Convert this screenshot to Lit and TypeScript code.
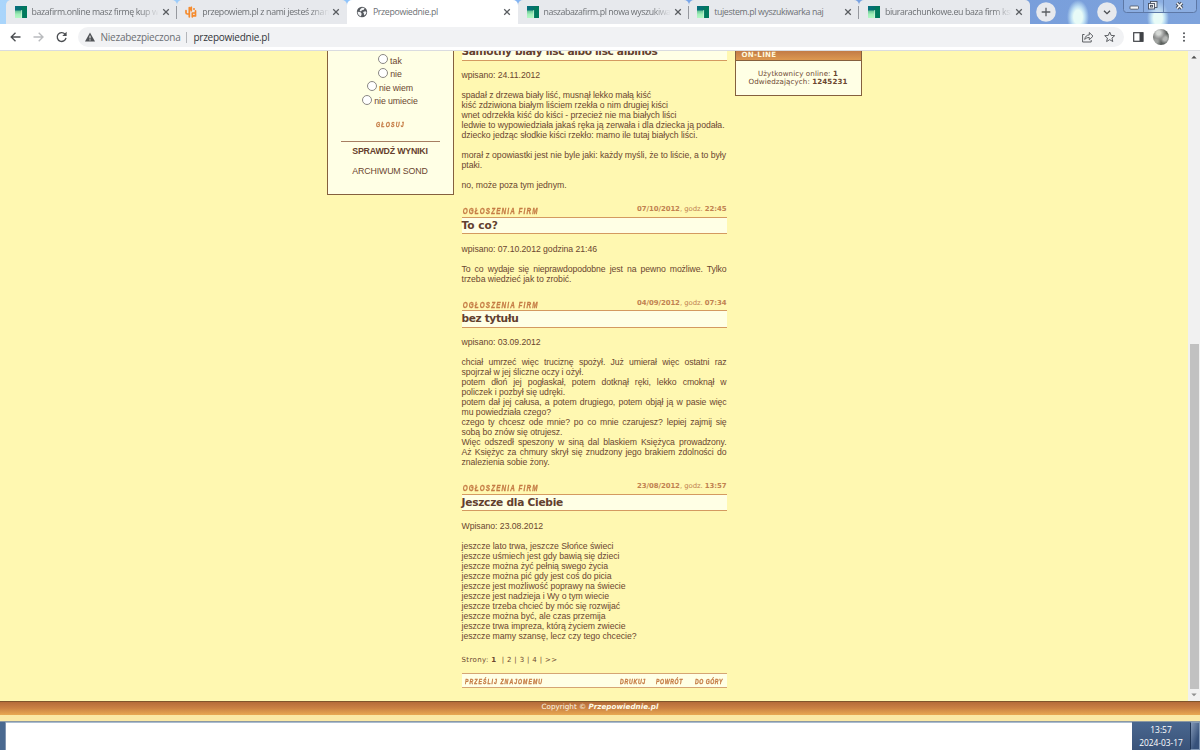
import { LitElement, html, css, nothing } from "lit";
import { customElement, property } from "lit/decorators.js";

/** One line of text whose tracking is adjusted to fill a given width. */
@customElement("fit-text")
class FitText extends LitElement {
  @property({ type: Number }) w = 0;
  /** Horizontal scale that an ancestor applies. */
  @property({ type: Number }) k = 1;
  static styles = css`
    :host { display: inline-block; white-space: pre; }
  `;
  render() { return html`<slot></slot>`; }
  firstUpdated() {
    const n = (this.textContent || "").length;
    if (!this.w || !n) return;
    const base = parseFloat(getComputedStyle(this).letterSpacing) || 0;
    const now = this.getBoundingClientRect().width;
    this.style.letterSpacing = `${base + (this.w - now) / this.k / n}px`;
  }
}

const close = html`<svg class="x" viewBox="0 0 8 8"><path d="M1.200 1.200l5.600 5.600M6.800 1.200L1.200 6.800" stroke="#5a5d61" stroke-width="1.250" fill="none"/></svg>`;

const green = html`<svg class="fav" viewBox="0 0 12 12">
  <defs><linearGradient id="g" x1="0" y1="0" x2="0" y2="1"><stop offset="0" stop-color="#5fbf90"/><stop offset=".5" stop-color="#a0eeb8"/><stop offset="1" stop-color="#b4f8c4"/></linearGradient>
  <linearGradient id="h" x1="0" y1="0" x2="1" y2="0"><stop offset="0" stop-color="#087080"/><stop offset="1" stop-color="#03705a"/></linearGradient></defs>
  <rect width="12" height="12" fill="url(#h)"/><rect y="4.500" width="7" height="7.500" fill="url(#g)"/><rect x="7" y="1" width="5" height="11" fill="#007a5c"/><path d="M6.600 4v8" stroke="#d9f5e2" stroke-width=".6"/></svg>`;

const orange = html`<svg class="fav" viewBox="0 0 12 12"><g fill="none" stroke="#f58a2c" stroke-width="1.700" stroke-linecap="round" stroke-linejoin="round">
  <path d="M1 4.500v2.300q0 1.200 1.400 1.200h1.800M4.300 1.500v9.300M4.300 4l2-2.700v3.400M7.300 10.800V7h3.200V4.800M10.500 7.500v2.400H8"/></g><circle cx="9" cy="3" r="1" fill="#f58a2c"/></svg>`;

const globe = html`<svg class="fav" viewBox="0 0 12 12"><circle cx="6" cy="6" r="5.200" fill="#55595e"/><path d="M1.600 5.800l2.600.2 1.300 1.300v1.500l-.7 1.600C2.600 9.600 1.500 7.700 1.600 5.800zM6 1.800l2.500.3-.6 1.700-2 .4-1 1.300-1.300-.7.8-1.700zM7 6l2.300-.7 1.200.6-.6 2-1.800 1.500L7.800 7.300z" fill="#f2f3f5"/></svg>`;

interface Tab { icon: unknown; text: string; w: number; active?: boolean; sep?: boolean; }
const tabs: Tab[] = [
  { icon: green, text: "bazafirm.online masz firmę kup w", w: 127, sep: true },
  { icon: orange, text: "przepowiem.pl z nami jesteś znan", w: 127 },
  { icon: globe, text: "Przepowiednie.pl", w: 65, active: true },
  { icon: green, text: "naszabazafirm.pl nowa wyszukiwa", w: 127, sep: true },
  { icon: green, text: "tujestem.pl wyszukiwarka naj", w: 109, sep: true },
  { icon: green, text: "biurarachunkowe.eu baza firm ksi", w: 127 },
];

@customElement("browser-bar")
class BrowserBar extends LitElement {
  static styles = css`
    :host { display: block; height: 51px; flex: none; font-family: "Open Sans", "Noto Sans", sans-serif; }
    .strip { height: 24px; display: flex; background: linear-gradient(90deg, #a9d5fb 0, #8fc4fb 30%, #78a6ea 55%, #789edb 84%, #7ea3dc 100%); overflow: hidden; box-sizing: border-box; padding-left: 6px; }
    .tab { width: 170.700px; flex: none; box-sizing: border-box; display: flex; align-items: center; padding: 0 7px 0 8.500px; background: #e7e9ed; border-radius: 5px 5px 0 0; position: relative; font-size: 8.800px; color: #6d7074; }
    .tab.active { background: #fff; }
    .tab.sep::after { content: ""; position: absolute; right: 0; top: 6px; width: 1px; height: 13px; background: #96999f; }
    .fav { width: 12px; height: 12px; margin-right: 5px; flex: none; }
    .label { width: 127px; overflow: hidden; white-space: pre; flex: none; line-height: 14px; height: 14px; }
    .label.fade { -webkit-mask-image: linear-gradient(90deg, #000 108px, transparent 127px); mask-image: linear-gradient(90deg, #000 108px, transparent 127px); }
    .x { width: 8px; height: 8px; margin-left: 3px; flex: none; }
    .sky { flex: 1; display: flex; background: radial-gradient(ellipse 11px 17px at 48px 17px, #e8fbf7 0 40%, #bfe0f4 62%, transparent 100%), radial-gradient(ellipse 11px 17px at 128px 18px, #e8fbf7 0 40%, #bfe0f4 62%, transparent 100%); }
    .round { width: 20px; height: 20px; margin-top: 2px; }
    .plus { margin-left: 6px; }
    .chev { margin-left: 41px; }
    .win { width: 74px; height: 14px; margin-left: 6px; margin-top: -1px; }
    .bar { height: 26px; background: #fff; display: flex; align-items: center; border-bottom: 1px solid #dadce0; }
    .bar svg { flex: none; display: block; }
    .pill { width: 1046px; height: 20px; margin-left: 8.500px; border-radius: 10px; background: #f1f2f4; display: flex; align-items: center; font-size: 10px; color: #6b6e73; line-height: 18px; box-sizing: border-box; padding: 0 8px 0 7px; }
    .warn { margin-right: 6px; }
    .div { width: 1px; height: 11px; background: #b4b6ba; margin: 0 7px 0 5px; }
    .url { color: #34363a; flex: 1; }
    .panel { margin-left: 9px; }
    .av { width: 16px; height: 16px; border-radius: 50%; background: radial-gradient(circle at 35% 25%, #d5d8d5 0 12%, #999c 35%, transparent 50%), radial-gradient(circle at 75% 60%, #b4b6b4 0 12%, transparent 35%), radial-gradient(circle at 20% 75%, #a0a3a0 0 10%, transparent 30%), #5b605d; margin-left: 9px; }
  `;
  render() {
    return html`
      <div class="strip">
        ${tabs.map(t => html`<div class="tab ${t.active ? "active" : ""} ${t.sep ? "sep" : ""}">${t.icon}<div class="label ${t.w > 120 ? "fade" : ""}"><fit-text .w=${t.w}>${t.text}</fit-text></div>${close}</div>`)}
        <div class="sky">
          <svg class="round plus" viewBox="0 0 20 20"><circle cx="10" cy="10" r="9.800" fill="#e7e9ed"/><path d="M10 5.700v8.600M5.700 10h8.600" stroke="#5a5d61" stroke-width="1.300"/></svg>
          <svg class="round chev" viewBox="0 0 20 20"><circle cx="10" cy="10" r="9.800" fill="#e7e9ed"/><path d="M7 8.700l3 3 3-3" fill="none" stroke="#494c50" stroke-width="1.300"/></svg>
          <svg class="win" viewBox="0 0 74 14"><rect x=".5" y="-4" width="73" height="17.500" rx="3" fill="#9dbde8" fill-opacity=".45" stroke="#5d78a6"/><path d="M20.500 0v13M40.500 0v13" stroke="#5d78a6" stroke-width=".8"/>
            <rect x="7" y="7" width="8.500" height="3.200" rx=".8" fill="#f4f6f8" stroke="#47505f" stroke-width=".8"/>
            <g fill="#f0f2f5" stroke="#47505f" stroke-width=".9"><rect x="27.500" y="2.500" width="6.500" height="6"/><rect x="25.500" y="4.500" width="6" height="5.500"/><rect x="27.500" y="6.400" width="2" height="1.600"/></g>
            <path d="M54 4l5 5.500M59 4l-5 5.500" stroke="#47505f" stroke-width="3.400"/><path d="M54 4l5 5.500M59 4l-5 5.500" stroke="#f5f6f8" stroke-width="1.500"/></svg>
        </div>
      </div>
      <div class="bar">
        <svg width="69" height="20" viewBox="0 0 69 20"><g fill="none" stroke="#4b4e52" stroke-width="1.350"><path d="M20.500 10H11.500M15.500 5.700L11.200 10l4.300 4.300"/><path d="M33.500 10h9M38.700 5.700L43 10l-4.300 4.300" stroke="#b9bbbe"/><path d="M65 7.200A4.400 4.400 0 1 0 66 10.800"/></g><path d="M66.600 4.800v4.300h-4.300z" fill="#4b4e52"/></svg>
        <div class="pill">
          <svg class="warn" width="10" height="10" viewBox="0 0 10 10"><path d="M5 .5L10 9.500H0z" fill="#505357"/><path d="M5 3.700v2.700M5 7.300v1.200" stroke="#fff" stroke-width="1"/></svg>
          <fit-text .w=${80}>Niezabezpieczona</fit-text><span class="div"></span><span class="url"><fit-text .w=${76}>przepowiednie.pl</fit-text></span>
          <svg width="34" height="12" viewBox="0 0 34 12"><g fill="none" stroke="#5c5f63" stroke-width="1"><path d="M2.500 3.500H.6v7.500h8.600V9M2.700 8.500C3 5.500 5 3.900 7.300 3.900V1.500l3.700 3.700-3.700 3.600V6.500C5.300 6.500 4 7 2.700 8.500z"/><path d="M27.700 1l1.400 3.400 3.600.3-2.750 2.350.85 3.500-3.100-1.900-3.100 1.900.85-3.500L22.700 4.700l3.600-.3z"/></g></svg>
        </div>
        <svg class="panel" width="11" height="10" viewBox="0 0 11 10"><rect x=".7" y=".7" width="9.200" height="8.600" fill="none" stroke="#404347" stroke-width="1.200"/><rect x="6.500" y=".5" width="3.800" height="9" fill="#404347"/></svg>
        <div class="av"></div>
        <svg width="24" height="14" viewBox="0 0 24 14"><g fill="#505357"><circle cx="15" cy="3.200" r="1"/><circle cx="15" cy="7" r="1"/><circle cx="15" cy="10.800" r="1"/></g></svg>
      </div>`;
  }
}

interface Line { t: string; w?: number; j?: boolean; }
interface Post { date?: string; hour?: string; title: string; tw: number; lines: Line[]; }
const posts: Post[] = [
  { title: "Samotny biały liść albo liść albinos", tw: 196, lines: [
    { t: "wpisano: 24.11.2012", w: 78.5 }, { t: "" },
    { t: "spadał z drzewa biały liść, musnął lekko małą kiść", w: 189.5 },
    { t: "kiść zdziwiona białym liściem rzekła o nim drugiej kiści", w: 206.5 },
    { t: "wnet odrzekła kiść do kiści - przecież nie ma białych liści", w: 215 },
    { t: "ledwie to wypowiedziała jakaś ręka ją zerwała i dla dziecka ją podała.", w: 263 },
    { t: "dziecko jedząc słodkie kiści rzekło: mamo ile tutaj białych liści.", w: 236 }, { t: "" },
    { t: "morał z opowiastki jest nie byle jaki: każdy myśli, że to liście, a to były", w: 264.5 },
    { t: "ptaki.", w: 20.5 }, { t: "" }, { t: "no, może poza tym jednym.", w: 105 } ] },
  { date: "07/10/2012", hour: "22:45", title: "To co?", tw: 36.5, lines: [
    { t: "wpisano: 07.10.2012 godzina 21:46", w: 135.5 }, { t: "" },
    { t: "To co wydaje się nieprawdopodobne jest na pewno możliwe. Tylko", j: true },
    { t: "trzeba wiedzieć jak to zrobić.", w: 110 } ] },
  { date: "04/09/2012", hour: "07:34", title: "bez tytułu", tw: 57, lines: [
    { t: "wpisano: 03.09.2012", w: 79 }, { t: "" },
    { t: "chciał umrzeć więc truciznę spożył. Już umierał więc ostatni raz", j: true },
    { t: "spojrzał w jej śliczne oczy i ożył.", w: 122 },
    { t: "potem dłoń jej pogłaskał, potem dotknął ręki, lekko cmoknął w", j: true },
    { t: "policzek i pozbył się udręki.", w: 103.5 },
    { t: "potem dał jej całusa, a potem drugiego, potem objął ją w pasie więc", j: true },
    { t: "mu powiedziała czego?", w: 89.5 },
    { t: "czego ty chcesz ode mnie? po co mnie czarujesz? lepiej zajmij się", j: true },
    { t: "sobą bo znów się otrujesz.", w: 101 },
    { t: "Więc odszedł speszony w siną dal blaskiem Księżyca prowadzony.", j: true },
    { t: "Aż Księżyc za chmury skrył się znudzony jego brakiem zdolności do", j: true },
    { t: "znalezienia sobie żony.", w: 88 } ] },
  { date: "23/08/2012", hour: "13:57", title: "Jeszcze dla Ciebie", tw: 101.5, lines: [
    { t: "Wpisano: 23.08.2012", w: 81.5 }, { t: "" },
    { t: "jeszcze lato trwa, jeszcze Słońce świeci", w: 152 },
    { t: "jeszcze uśmiech jest gdy bawią się dzieci", w: 158 },
    { t: "jeszcze można żyć pełnią swego życia", w: 146.5 },
    { t: "jeszcze można pić gdy jest coś do picia", w: 150 },
    { t: "jeszcze jest możliwość poprawy na świecie", w: 164 },
    { t: "jeszcze jest nadzieja i Wy o tym wiecie", w: 147.5 },
    { t: "jeszcze trzeba chcieć by móc się rozwijać", w: 158.5 },
    { t: "jeszcze można być, ale czas przemija", w: 144 },
    { t: "jeszcze trwa impreza, którą życiem zwiecie", w: 164 },
    { t: "jeszcze mamy szansę, lecz czy tego chcecie?", w: 175 } ] },
];

@customElement("app-root")
class AppRoot extends LitElement {
  static styles = css`
    :host { display: flex; flex-direction: column; width: 1200px; height: 750px; overflow: hidden; background: #fff8b1; font-family: "Liberation Sans", Arial, sans-serif; color: #6b4630; }
    .view { height: 649.500px; flex: none; display: flex; overflow: hidden; }
    .page { flex: 1; height: 649.500px; overflow: hidden; display: grid; grid-template-columns: 127px 265px 127px; column-gap: 8px; padding-left: 326.500px; align-items: start; }
    .box { box-sizing: border-box; border: 1px solid #85603e; border-top: 0; background: #ffffe5; }
    .poll { height: 144px; text-align: center; font-size: 8.800px; padding: 3px 13px 0; }
    .opt { height: 13.500px; display: flex; justify-content: center; align-items: center; gap: 2px; }
    .opt i { width: 8px; height: 8px; border: 1px solid #8b8883; border-radius: 50%; background: #fff; margin-top: -3px; }
    .opt span { line-height: 13px; padding-top: 1px; }
    .cond { font-weight: 700; font-style: italic; color: #c57c45; -webkit-text-stroke: .35px #c57c45; transform: scaleX(.66); transform-origin: 0 50%; white-space: nowrap; }
    .vote { width: 29px; margin: 11px auto 0; height: 11px; line-height: 11px; font-size: 8px; }
    .res { margin-top: 10.500px; border-top: 1px solid #a67e62; padding-top: 3px; line-height: 12px; font-weight: 700; color: #65402c; }
    .arch { margin-top: 8px; line-height: 12px; }
    .main { margin-top: -8px; }
    .meta { height: 26.500px; display: flex; justify-content: space-between; box-sizing: border-box; padding-top: 15px; font-family: "DejaVu Sans", Verdana, sans-serif; color: #c18250; font-size: 6.900px; line-height: 9px; }
    .meta .cond { font-family: "Liberation Sans", sans-serif; font-size: 9.600px; line-height: 12px; height: 12px; padding-left: 1px; width: 76px; }
    .title { height: 17.500px; box-sizing: border-box; border-top: 1px solid #d49a60; border-bottom: 1px solid #d49a60; background: #ffffe5; font: 700 10.600px/15px "DejaVu Sans", Verdana, sans-serif; color: #62402e; margin-bottom: 9.500px; }
    .line { height: 10px; line-height: 10px; font-size: 8.700px; white-space: nowrap; }
    .line.j { text-align: justify; text-align-last: justify; white-space: normal; letter-spacing: -.1px; }
    .online { width: 127px; height: 45px; font-family: "DejaVu Sans", Verdana, sans-serif; font-size: 7.100px; text-align: center; line-height: 8.500px; }
    .oh { height: 9.500px; background: linear-gradient(#c27b46, #dd9850); border-bottom: 1px solid #85603e; color: #fff8dc; font-weight: 700; text-align: left; padding-left: 6px; line-height: 7px; box-sizing: border-box; margin-bottom: 9px; }
    .pages { margin-top: 14.500px; height: 10px; font: 7px/10px "DejaVu Sans", Verdana, sans-serif; }
    .tools { margin-top: 7.500px; height: 15px; box-sizing: border-box; border-top: 1px solid #d5a573; border-bottom: 1px solid #d5a573; background: #ffffe5; display: flex; padding: 1px 4px 0 3.500px; line-height: 14px; font-size: 7.800px; }
    .w1 { width: 155px; } .w2 { width: 36.500px; } .w3 { width: 38.500px; } .w4 { width: 28px; }
    .sb { width: 12px; background: #f1f1f1; display: flex; flex-direction: column; align-items: center; height: 649.500px; }
    .sb svg { width: 12px; height: 12px; flex: none; }
    .thumb { width: 9px; height: 345px; background: #c1c1c1; margin-top: 281px; }
    .copy { height: 14px; flex: none; box-sizing: border-box; border-top: 1px solid #80552c; background: linear-gradient(#b56c3a, #c98043 45%, #e9a952); color: #fffbe8; text-align: center; font: 7.200px/10px "DejaVu Sans", Verdana, sans-serif; }
    .pale { height: 6.500px; flex: none; background: #fbe9a5; }
    .task { flex: 1; display: flex; border-top: 1px solid #8c98a2; background: #fff; box-shadow: inset 0 1px #a9bccf; }
    .start { width: 5px; background: #4a6990; border-right: 1px solid #8196b2; }
    .clock { margin-left: auto; width: 58px; background: linear-gradient(#49678f, #3a5379); color: #fff; font: 8.400px/12.500px "Open Sans", sans-serif; text-align: center; padding-top: 2px; box-sizing: border-box; }
    .show { width: 10px; box-sizing: border-box; border: 1px solid #8299b6; border-left-color: #1f3555; background: linear-gradient(110deg, #8398b6, #36517a 70%); }
  `;

  post(p: Post) {
    return html`
      ${p.date ? html`<div class="meta">${this.cond("OGŁOSZENIA FIRM", 76)}<fit-text .w=${89.5}><b>${p.date}</b>, godz. <b>${p.hour}</b></fit-text></div>` : nothing}
      <div class="title"><fit-text .w=${p.tw}>${p.title}</fit-text></div>
      ${p.lines.map(l => html`<div class="line ${l.j ? "j" : ""}">${l.j || !l.t ? l.t : html`<fit-text .w=${l.w ?? 0}>${l.t}</fit-text>`}</div>`)}`;
  }

  /** Narrow slanted caption; w is the width it takes on screen. */
  cond(text: string, w: number) {
    return html`<div class="cond"><fit-text .w=${w} .k=${0.66}>${text}</fit-text></div>`;
  }

  render() {
    return html`
      <browser-bar></browser-bar>
      <div class="view">
        <div class="page">
          <div class="box poll">
            ${[["tak", 12], ["nie", 11.5], ["nie wiem", 34], ["nie umiecie", 43.5]].map(o => html`<div class="opt"><i></i><span><fit-text .w=${o[1]}>${o[0]}</fit-text></span></div>`)}
            <div class="vote">${this.cond("GŁOSUJ", 29)}</div>
            <div class="res"><fit-text .w=${75.5}>SPRAWDŹ WYNIKI</fit-text></div>
            <div class="arch"><fit-text .w=${75.5}>ARCHIWUM SOND</fit-text></div>
          </div>
          <div class="main">
            ${posts.map(p => this.post(p))}
            <div class="pages"><fit-text .w=${96}>Strony: <b>1</b>  | 2 | 3 | 4 | >></fit-text></div>
            <div class="tools">
              <div class="w1">${this.cond("PRZEŚLIJ ZNAJOMEMU", 78)}</div>
              <div class="w2">${this.cond("DRUKUJ", 26)}</div>
              <div class="w3">${this.cond("POWRÓT", 27)}</div>
              <div class="w4">${this.cond("DO GÓRY", 28)}</div>
            </div>
          </div>
          <div class="box online">
            <div class="oh"><fit-text .w=${35}>ON-LINE</fit-text></div>
            <div><fit-text .w=${80}>Użytkownicy online: <b>1</b></fit-text></div>
            <div><fit-text .w=${99}>Odwiedzających: <b>1245231</b></fit-text></div>
          </div>
        </div>
        <div class="sb">
          <svg viewBox="0 0 12 12"><path d="M3.300 7.500L6 4.800l2.700 2.700z" fill="#505050"/></svg>
          <div class="thumb"></div>
          <svg viewBox="0 0 12 12"><path d="M3.300 4.500L6 7.200l2.700-2.700z" fill="#909090"/></svg>
        </div>
      </div>
      <div class="copy"><fit-text .w=${117}>Copyright © <b><i>Przepowiednie.pl</i></b></fit-text></div>
      <div class="pale"></div>
      <div class="task"><div class="start"></div><div class="clock">13:57<br>2024-03-17</div><div class="show"></div></div>`;
  }
}
